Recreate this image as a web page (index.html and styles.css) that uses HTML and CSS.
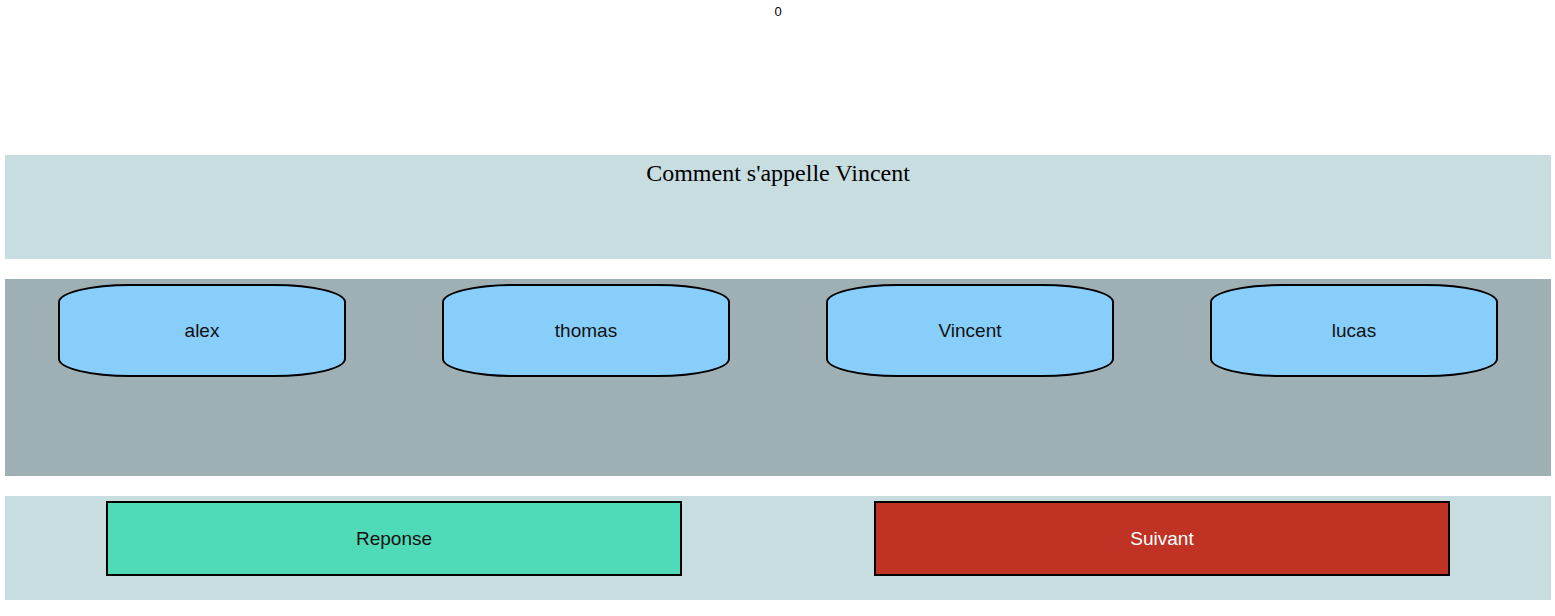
FILE: index.html
```html
<!DOCTYPE html>
<html lang="fr">
<head>
<meta charset="utf-8">
<title>Quiz</title>
<link rel="stylesheet" href="styles.css">
</head>
<body>
<div class="score">0</div>
<section class="question">Comment s'appelle Vincent</section>
<section class="choices">
  <div class="cell"><div class="pill">alex</div></div>
  <div class="cell"><div class="pill">thomas</div></div>
  <div class="cell"><div class="pill">Vincent</div></div>
  <div class="cell"><div class="pill">lucas</div></div>
</section>
<section class="actions">
  <div class="cell"><div class="btn btn-answer">Reponse</div></div>
  <div class="cell"><div class="btn btn-next">Suivant</div></div>
</section>
</body>
</html>
```
FILE: styles.css
```css
html, body {
  background: #ffffff;
}
body {
  margin: 0 4px 0 5px;
  font-family: "Liberation Sans", Arial, sans-serif;
  color: #000;
}
.score {
  height: 155px;
  box-sizing: border-box;
  padding-top: 4px;
  text-align: center;
  font-size: 13px;
  line-height: 16px;
}
.question {
  height: 104px;
  box-sizing: border-box;
  padding-top: 5px;
  background: #c8dde0;
  text-align: center;
  font-family: "Liberation Serif", "Times New Roman", serif;
  font-size: 24px;
  line-height: 27px;
}
.choices {
  margin-top: 20px;
  height: 197px;
  box-sizing: border-box;
  padding: 5px 5px 0;
  background: #9eb0b3;
  display: grid;
  grid-template-columns: repeat(4, 1fr);
  align-items: start;
}
.cell {
  display: flex;
  justify-content: center;
}
.pill {
  width: 75%;
  height: 93px;
  box-sizing: border-box;
  border: 2px solid #000;
  border-radius: 72px / 18px;
  background: #87cefa;
  display: flex;
  align-items: center;
  justify-content: center;
  font-size: 19px;
  color: #111;
}
.actions {
  margin-top: 20px;
  height: 104px;
  box-sizing: border-box;
  padding: 5px 5px 0;
  background: #c8dde0;
  display: grid;
  grid-template-columns: 1fr 1fr;
  align-items: start;
}
.btn {
  width: 75%;
  height: 75px;
  box-sizing: border-box;
  border: 2px solid #000;
  display: flex;
  align-items: center;
  justify-content: center;
  font-size: 19px;
}
.btn-answer {
  background: #50dbb8;
  color: #111;
}
.btn-next {
  background: #c03224;
  color: #ffffff;
}
```
